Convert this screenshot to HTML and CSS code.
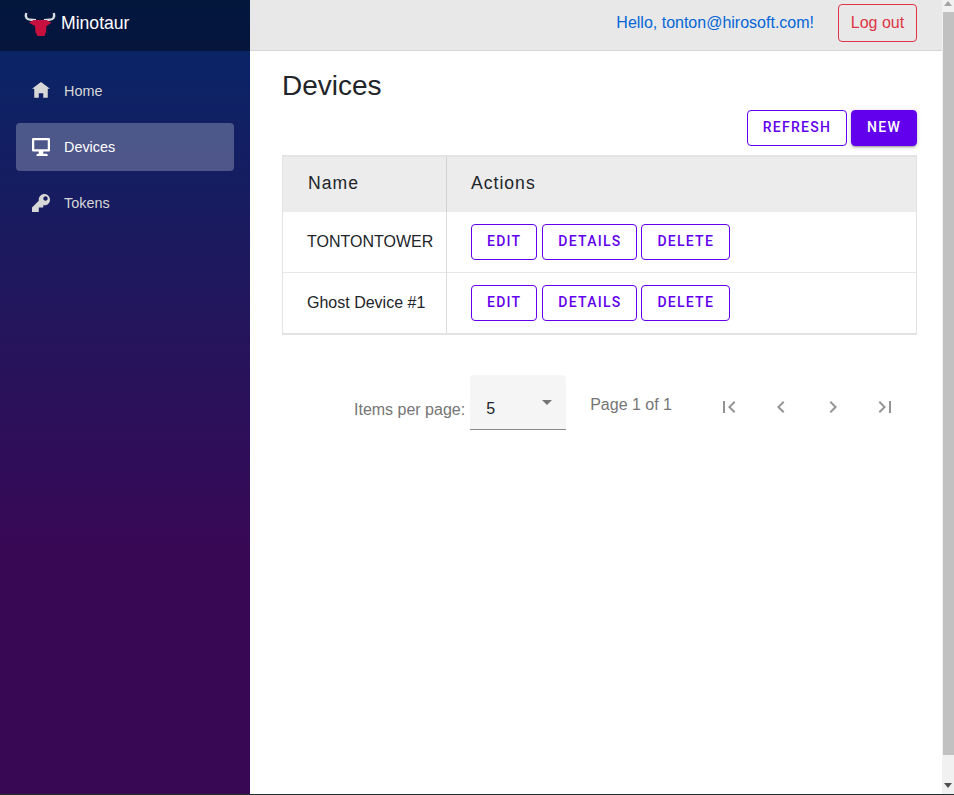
FILE: index.html
```html
<!DOCTYPE html>
<html lang="en">
<head>
<meta charset="utf-8">
<title>Minotaur</title>
<link rel="stylesheet" href="styles.css">
</head>
<body>
<div class="app">
  <aside class="sidebar">
    <div class="brand">
      <svg class="logo" viewBox="0 0 32 24" width="32" height="24">
        <path class="horn" d="M2.2 1 C1 5 2.5 7.5 6 7.6 L12 8.2"/>
        <path class="horn" d="M29.8 1 C31 5 29.5 7.5 26 7.6 L20 8.2"/>
        <path class="head" d="M5 10.8 L9.5 8 L22.5 8 L27.5 10.8 L22.5 14 L22 20 L20.5 24 L13.5 24 L11.5 20 L11 14Z"/>
      </svg>
      <span class="brand-name">Minotaur</span>
    </div>
    <nav class="nav">
      <a class="nav-item">
        <svg class="nav-icon" viewBox="0 0 8 8"><path d="M4 0l-4 3h1v4h2v-2h2v2h2v-4.03l1 .03-4-3z"/></svg>
        <span>Home</span>
      </a>
      <a class="nav-item active">
        <svg class="nav-icon" viewBox="0 0 8 8"><path d="M.5 0h7a.5.5 0 0 1 .5.5v5a.5.5 0 0 1-.5.5h-2.5v1h1c.55 0 1 .22 1 .5v.5h-5v-.5c0-.28.45-.5 1-.5v-1h-2.5a.5.5 0 0 1-.5-.5v-5a.5.5 0 0 1 .5-.5zm.5 1v4h6v-4z"/></svg>
        <span>Devices</span>
      </a>
      <a class="nav-item">
        <svg class="nav-icon" viewBox="0 0 8 8"><path d="M5.5 0c-1.38 0-2.5 1.12-2.5 2.5 0 .16 0 .32.03.47l-3.03 3.03v2h3v-2h2v-1l.03-.03c.15.03.31.03.47.03 1.38 0 2.5-1.12 2.5-2.5s-1.12-2.5-2.5-2.5zm.5 1c.55 0 1 .45 1 1s-.45 1-1 1-1-.45-1-1 .45-1 1-1z"/></svg>
        <span>Tokens</span>
      </a>
    </nav>
  </aside>

  <main class="main">
    <header class="topbar">
      <a class="hello">Hello, tonton@hirosoft.com!</a>
      <button class="logout">Log out</button>
    </header>
    <section class="content">
      <h1 class="title">Devices</h1>
      <div class="toolbar">
        <button class="btn">Refresh</button>
        <button class="btn primary">New</button>
      </div>
      <table class="table">
        <thead>
          <tr><th class="col-name">Name</th><th>Actions</th></tr>
        </thead>
        <tbody>
          <tr>
            <td class="col-name">TONTONTOWER</td>
            <td><div class="actions"><button class="btn">Edit</button><button class="btn">Details</button><button class="btn">Delete</button></div></td>
          </tr>
          <tr>
            <td class="col-name">Ghost Device #1</td>
            <td><div class="actions"><button class="btn">Edit</button><button class="btn">Details</button><button class="btn">Delete</button></div></td>
          </tr>
        </tbody>
      </table>
      <div class="pager">
        <span class="pager-label">Items per page:</span>
        <div class="select">
          <span class="select-value">5</span>
          <span class="select-arrow"></span>
        </div>
        <span class="pager-range">Page 1 of 1</span>
        <div class="pager-buttons">
          <span class="icon-btn"><svg viewBox="0 0 24 24"><path d="M18.41 16.59L13.82 12l4.59-4.59L17 6l-6 6 6 6zM6 6h2v12H6z"/></svg></span>
          <span class="icon-btn"><svg viewBox="0 0 24 24"><path d="M15.41 7.41L14 6l-6 6 6 6 1.41-1.41L10.83 12z"/></svg></span>
          <span class="icon-btn"><svg viewBox="0 0 24 24"><path d="M10 6L8.59 7.41 13.17 12l-4.58 4.59L10 18l6-6z"/></svg></span>
          <span class="icon-btn"><svg viewBox="0 0 24 24"><path d="M5.59 7.41L10.18 12l-4.59 4.59L7 18l6-6-6-6zM16 6h2v12h-2z"/></svg></span>
        </div>
      </div>
    </section>
  </main>

  <div class="scrollbar">
    <span class="sb-arrow up"></span>
    <span class="sb-thumb"></span>
    <span class="sb-arrow down"></span>
  </div>
</div>
<div class="taskbar-edge"></div>
</body>
</html>
```
FILE: styles.css
```css
* { box-sizing: border-box; }
html, body { margin: 0; padding: 0; height: 795px; overflow: hidden; background: #fff; }
body { font-family: "Liberation Sans", Arial, sans-serif; font-size: 16px; color: #212529; }

.app { display: flex; height: 794px; }

/* Sidebar */
.sidebar { width: 250px; flex: none; background: linear-gradient(180deg, #052767 0%, #390855 70%); }
.brand { height: 51px; padding: 0 0 4px 24px; display: flex; align-items: center; background: rgba(0, 0, 0, .4); }
.logo { flex: none; display: block; margin-right: 5px; }
.horn { fill: none; stroke: #d9dde2; stroke-width: 2.4; }
.head { fill: #c8103f; }
.brand-name { color: #fff; font-size: 17.6px; }
.nav { display: flex; flex-direction: column; gap: 8px; padding: 16px 16px 0; }
.nav-item { height: 48px; display: flex; align-items: center; padding-left: 16px; border-radius: 4px; color: #d7d7d7; font-size: 14.4px; }
.nav-item.active { background: rgba(255, 255, 255, .25); color: #fff; }
.nav-icon { width: 18px; height: 18px; flex: none; margin-right: 14px; fill: currentColor; }

/* Main */
.main { flex: 1; min-width: 0; display: flex; flex-direction: column; }
.topbar { height: 51px; flex: none; display: flex; align-items: center; justify-content: flex-end; padding: 0 25px 4px 0; background: #e8e8e8; border-bottom: 1px solid #d6d5d5; }
.hello { color: #0366d6; margin-right: 24px; }
.logout { width: 79px; height: 38px; background: transparent; border: 1px solid #dc3545; border-radius: 4px; color: #dc3545; font: 16px "Liberation Sans", Arial, sans-serif; padding: 0; }
.content { padding: 19px 25px 0 32px; }
.title { margin: 0; font-size: 28px; font-weight: 400; line-height: 32px; color: #212529; }

/* Buttons */
.btn { height: 36px; padding: 0 15px 2px; background: #fff; border: 1px solid #6200ee; border-radius: 4px; color: #6200ee; font: 500 14px Roboto, sans-serif; letter-spacing: 1.25px; text-transform: uppercase; }
.btn.primary { background: #6200ee; color: #fff; box-shadow: 0 2px 2px -1px rgba(0,0,0,.3), 0 1px 4px rgba(0,0,0,.2); }
.toolbar { display: flex; justify-content: flex-end; gap: 4px; margin-top: 8px; }
.actions { display: flex; gap: 5px; }
.actions .btn + .btn + .btn { margin-left: -1px; }

/* Table */
.table { width: 100%; margin-top: 9px; border-collapse: separate; border-spacing: 0; border-style: solid; border-color: #e3e3e3; border-width: 2px 1px 2px 1px; table-layout: fixed; }
.table th { height: 55px; padding: 0 24px 2px; background: #ececec; text-align: left; font-weight: 400; font-size: 17.6px; letter-spacing: 1px; color: #212529; border-left: 1px solid #d2d2d2; }
.table td { height: 60px; padding: 0 24px; font-size: 16px; border-left: 1px solid #dcdcdc; }
.table tbody tr:first-child td { height: 61px; border-bottom: 1px solid #e6e6e6; }
.table .col-name { width: 163px; padding-right: 0; border-left: none; }
.table th.col-name { padding-left: 25px; }

/* Pagination */
.pager { display: flex; justify-content: flex-end; align-items: flex-start; padding: 40px 8px 0 0; }
.pager-label { margin: 26px 5px 0 0; font-size: 16px; color: #757575; }
.select { position: relative; width: 96px; height: 55px; padding: 25px 0 0 16px; background: #f5f5f5; border-bottom: 1px solid #8a8a8a; border-radius: 4px 4px 0 0; }
.select-value { font-size: 16px; color: #212529; }
.select-arrow { position: absolute; top: 25px; right: 14px; width: 0; height: 0; border-left: 5px solid transparent; border-right: 5px solid transparent; border-top: 5px solid #757575; }
.pager-range { margin: 21px 33px 0 24px; font-size: 16px; color: #757575; }
.pager-buttons { display: flex; gap: 4px; margin-top: 8px; }
.icon-btn { width: 48px; height: 48px; display: flex; align-items: center; justify-content: center; }
.icon-btn svg { width: 24px; height: 24px; fill: rgba(0, 0, 0, .42); }

/* Scrollbar */
.scrollbar { width: 12px; flex: none; display: flex; flex-direction: column; align-items: stretch; background: #f1f1f1; }
.sb-thumb { height: 743px; margin-left: 1px; background: #c1c1c1; }
.sb-arrow { height: 12px; flex: none; position: relative; }
.sb-arrow::after { content: ""; position: absolute; left: 2px; width: 0; height: 0; border-left: 4px solid transparent; border-right: 4px solid transparent; }
.sb-arrow.up::after { top: 1px; border-bottom: 5px solid #a3a3a3; }
.sb-arrow.down { margin-top: auto; margin-bottom: 2px; }
.sb-arrow.down::after { top: 3px; border-top: 5px solid #505050; }

.taskbar-edge { height: 1px; background: #20302f; }
```
